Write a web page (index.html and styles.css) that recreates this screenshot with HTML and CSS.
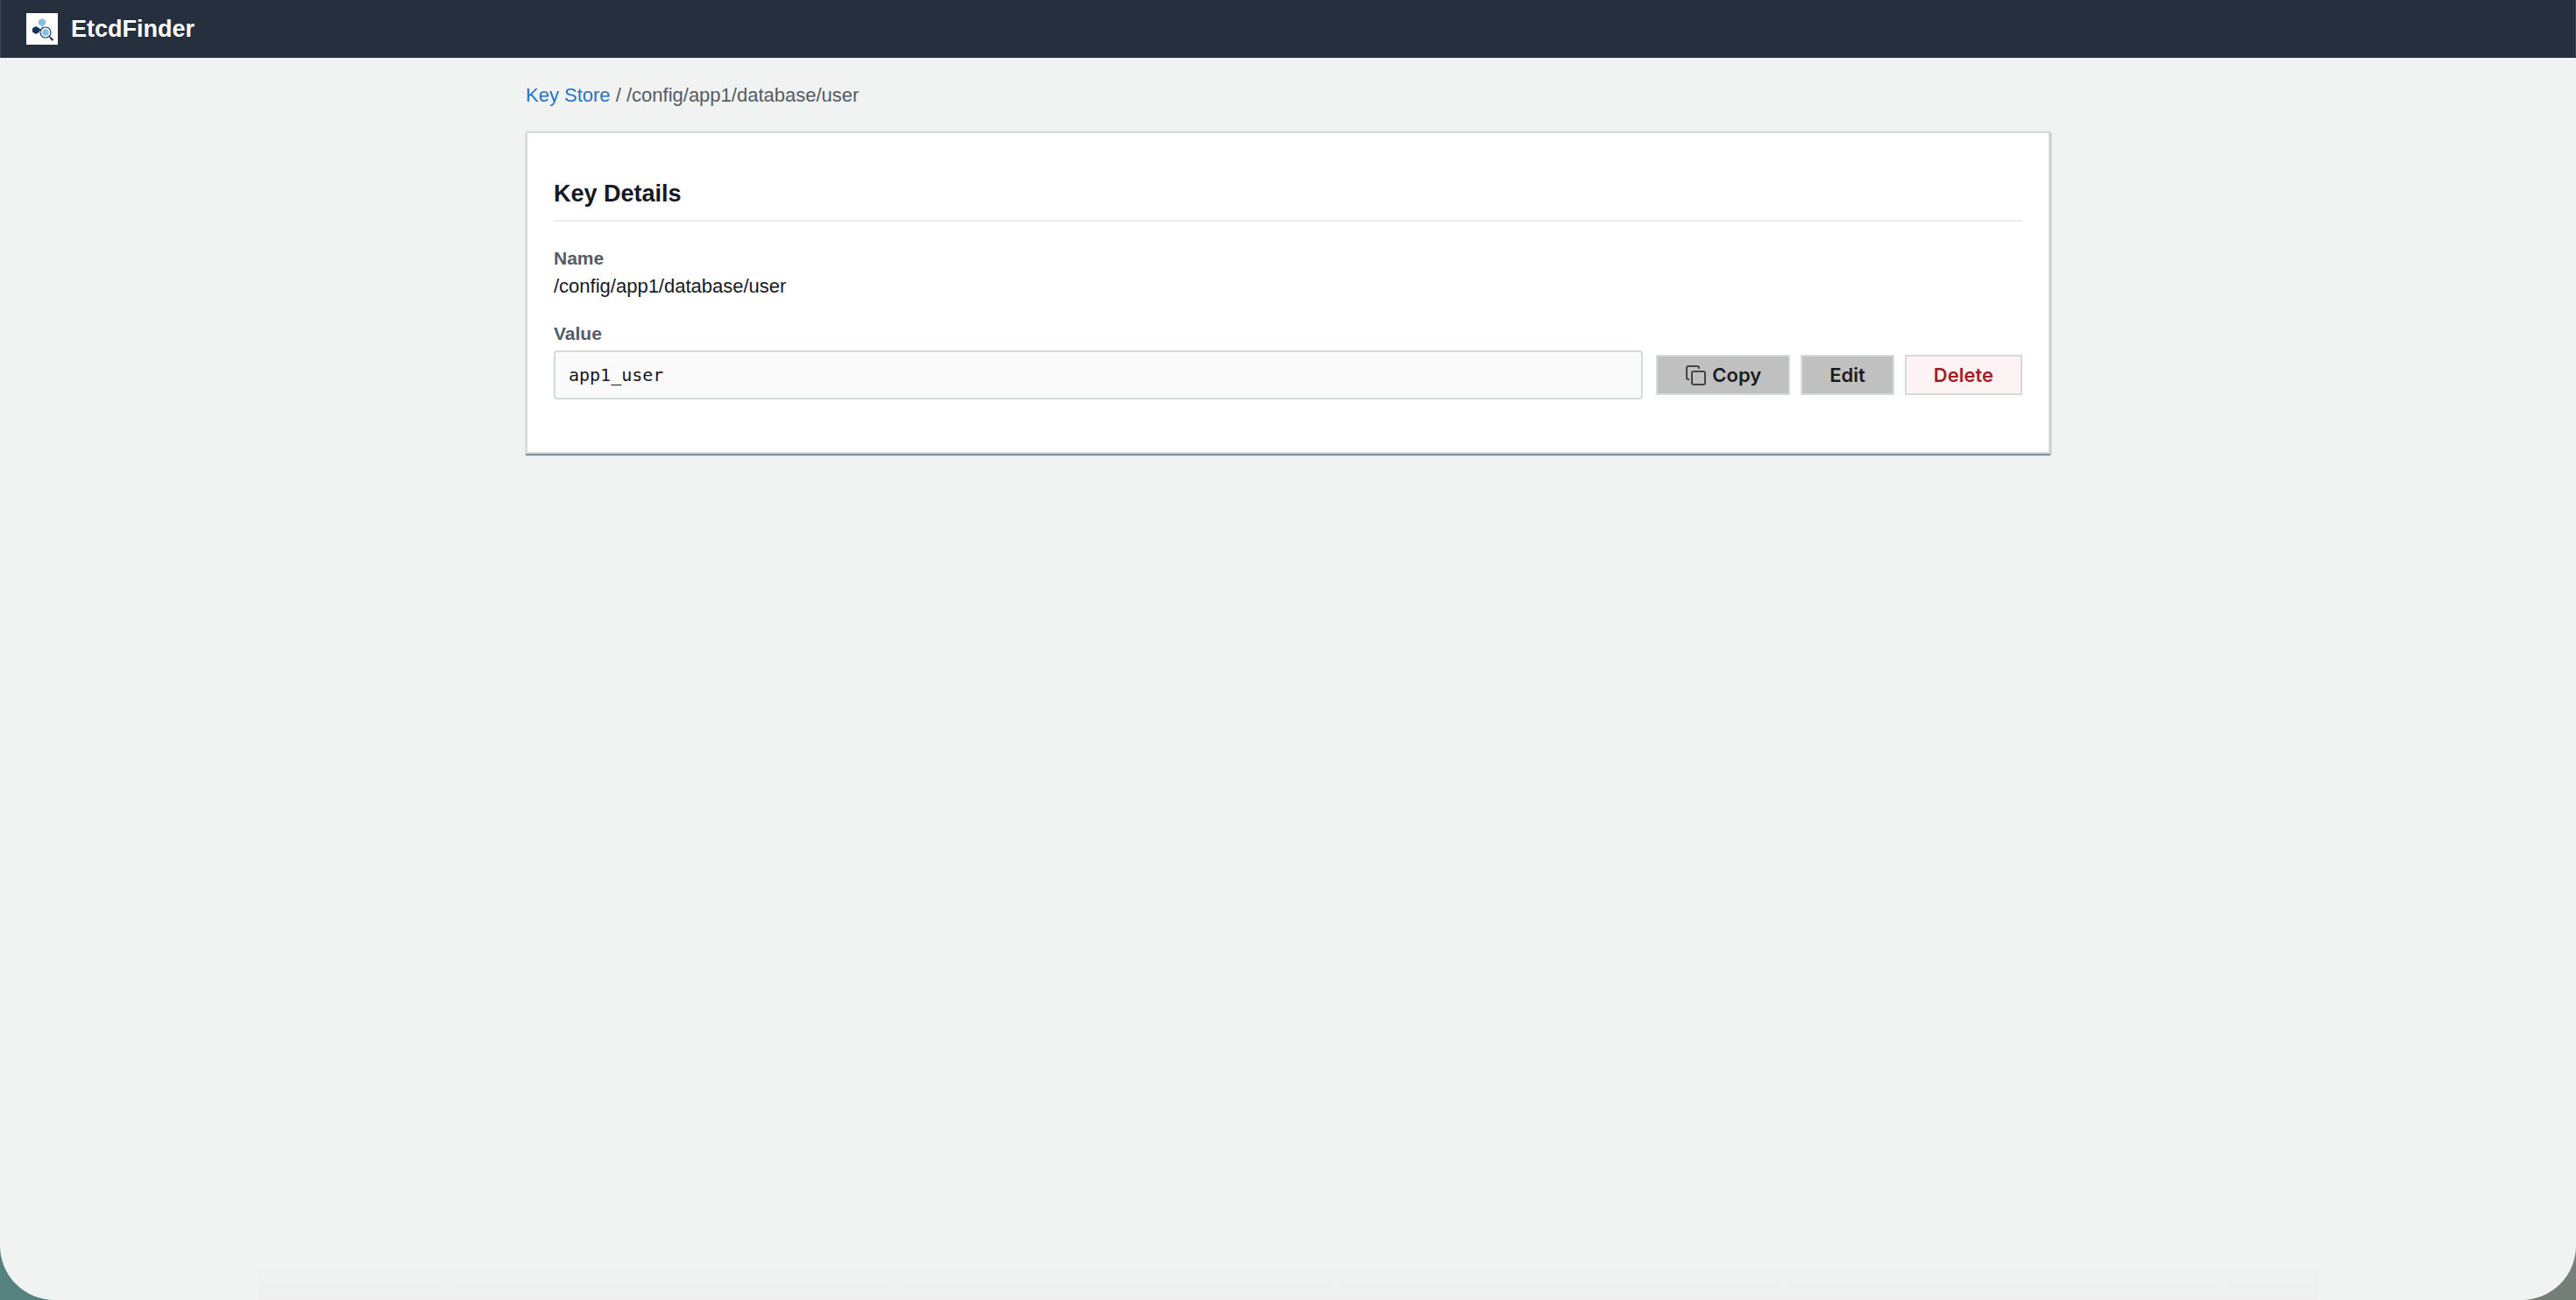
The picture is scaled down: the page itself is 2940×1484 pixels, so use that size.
FILE: index.html
```html
<!DOCTYPE html>
<html lang="en">
<head>
  <meta charset="UTF-8">
  <meta name="viewport" content="width=device-width, initial-scale=1.0">
  <title>EtcdFinder</title>
  <link rel="stylesheet" href="styles.css">
</head>
<body>
  <div class="app">
    <!-- Top bar -->
    <header class="top-bar">
      <svg class="logo" viewBox="0 0 36 36" aria-hidden="true">
        <rect width="36" height="36" fill="#fdfdfe"/>
        <path d="M11 19h8" stroke="#16325c" stroke-width="2"/>
        <path d="M18 14l1 5" stroke="#86bfdf" stroke-width="2"/>
        <polygon points="18,6 22,8.200 22,12.800 18,15 14,12.800 14,8.200" fill="#86bfdf"/>
        <polygon points="11,15 15,17.200 15,21.500 11,24 7,21.500 7,17.200" fill="#16325c"/>
        <circle cx="22" cy="22" r="6" fill="#fdfdfe" stroke="#24426a" stroke-width="1.200"/>
        <polygon points="22,17.800 25.700,20 25.700,24 22,26.200 18.300,24 18.300,20" fill="#86bfdf"/>
        <path d="M26 26.500l1.500 1.500" stroke="#24426a" stroke-width="1.200"/>
        <path d="M27.500 28l3 3" stroke="#16325c" stroke-width="2.200"/>
      </svg>
      <span class="brand">EtcdFinder</span>
    </header>

    <main class="container">
      <!-- Breadcrumb -->
      <nav class="breadcrumb">
        <a href="#">Key Store</a> / <span>/config/app1/database/user</span>
      </nav>

      <!-- Key details -->
      <section class="card">
        <h1 class="card-title">Key Details</h1>

        <div class="field">
          <div class="label">Name</div>
          <div class="field-text">/config/app1/database/user</div>
        </div>

        <div class="field">
          <div class="label">Value</div>
          <div class="value-row">
            <div class="value-box">app1_user</div>
            <div class="actions">
              <button class="btn" type="button">
                <svg class="copy-icon" viewBox="0 0 24 24" aria-hidden="true">
                  <rect x="8" y="8" width="15" height="15" rx="2"/>
                  <path d="M5 17H4a2 2 0 0 1-2-2V4a2 2 0 0 1 2-2H14a2 2 0 0 1 2 2v1"/>
                </svg>
                Copy
              </button>
              <button class="btn" type="button">Edit</button>
              <button class="btn btn-danger" type="button">Delete</button>
            </div>
          </div>
        </div>
      </section>
    </main>
  </div>
</body>
</html>
```
FILE: styles.css
```css
* {
  box-sizing: border-box;
}

html {
  background: linear-gradient(to right, #55817e 50%, #747f7a 50%);
}

body {
  margin: 0;
  font-family: "Helvetica Neue", "Liberation Sans", Arial, sans-serif;
  font-size: 22px;
  line-height: 32px;
  color: #16191f;
}

.app {
  min-height: 100vh;
  background: linear-gradient(#f1f3f3, #eeefee) bottom center / 80% 44px no-repeat #f1f3f3;
  border-radius: 0 0 62px 62px;
}

/* Top bar */
.top-bar {
  display: flex;
  align-items: center;
  gap: 15px;
  height: 66px;
  padding: 0 30px;
  background: #262f3e;
  box-shadow: inset 1px 0 #3c4553, inset -1px 0 #3c4553;
  color: #fff;
}

.logo {
  width: 36px;
  height: 36px;
}

.brand {
  font-size: 27px;
  font-weight: bold;
}

.container {
  max-width: 1800px;
  margin: 0 auto;
  padding: 27px 30px;
}

/* Breadcrumb */
.breadcrumb {
  margin-bottom: 25px;
  color: #545b64;
}

.breadcrumb a {
  color: #2a73bf;
  text-decoration: none;
}

/* Card */
.card {
  padding: 51px 30px 38px;
  background: #fff;
  border: 2px solid #d5dbdb;
  box-shadow:
    0 2px 1px 0 rgba(0, 28, 36, 0.4),
    1px 1px 2px 0 rgba(0, 28, 36, 0.2);
}

.card-title {
  margin: 0 0 26px;
  padding-bottom: 12px;
  border-bottom: 2px solid #eaeded;
  font-size: 27px;
  line-height: 36px;
}

.field {
  margin-bottom: 22px;
}

.label {
  font-size: 21px;
  font-weight: bold;
  color: #545b64;
}

/* Value and its buttons */
.value-row {
  display: flex;
  align-items: center;
  gap: 15px;
  margin-top: 3px;
}

.value-box {
  flex: 1;
  padding: 12px 15px;
  background: #fafafa;
  border: 2px solid #d5dbdb;
  border-radius: 4px;
  font-family: Menlo, "DejaVu Sans Mono", monospace;
  font-size: 20px;
  line-height: 28px;
}

.actions {
  display: flex;
  gap: 12px;
}

.btn {
  display: flex;
  align-items: center;
  gap: 7px;
  height: 46px;
  padding: 0 31px;
  background: #c0c0c0;
  border: 2px solid #d5dbdb;
  color: #1c1c1c;
  font-family: Inter, sans-serif;
  font-size: 22px;
  font-weight: 600;
  cursor: pointer;
}

.btn-danger {
  background: #fdf3f4;
  color: #a61d24;
}

.copy-icon {
  width: 24px;
  height: 24px;
  fill: none;
  stroke: #444;
  stroke-width: 2;
}
```
